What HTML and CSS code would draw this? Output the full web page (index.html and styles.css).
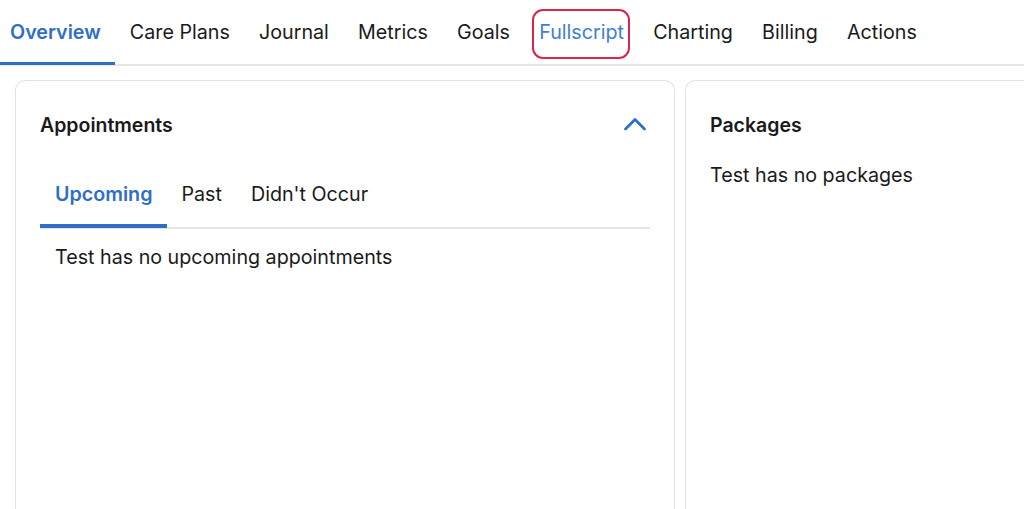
FILE: index.html
```html
<!DOCTYPE html>
<html lang="en">
<head>
    <meta charset="UTF-8">
    <meta name="viewport" content="width=device-width, initial-scale=1.0">
    <title>Client Overview</title>
    <link rel="stylesheet" href="styles.css">
</head>
<body>
    <nav class="main-tabs">
        <a class="main-tab active">Overview</a>
        <a class="main-tab">Care Plans</a>
        <a class="main-tab">Journal</a>
        <a class="main-tab">Metrics</a>
        <a class="main-tab">Goals</a>
        <a class="main-tab highlighted">Fullscript</a>
        <a class="main-tab">Charting</a>
        <a class="main-tab">Billing</a>
        <a class="main-tab">Actions</a>
    </nav>

    <div class="cards">
        <section class="card appointments">
            <div class="card-header">
                <h2>Appointments</h2>
                <button class="collapse-btn" aria-label="Collapse">
                    <svg width="24" height="16" viewBox="0 0 24 16">
                        <path d="M2.5 13 L12 3.5 L21.5 13" fill="none" stroke="#2f6fc6" stroke-width="2.8" stroke-linecap="round" stroke-linejoin="round"/>
                    </svg>
                </button>
            </div>
            <div class="sub-tabs">
                <a class="sub-tab active">Upcoming</a>
                <a class="sub-tab">Past</a>
                <a class="sub-tab">Didn't Occur</a>
            </div>
            <p class="empty">Test has no upcoming appointments</p>
        </section>

        <section class="card packages">
            <div class="card-header">
                <h2>Packages</h2>
            </div>
            <p class="empty flush">Test has no packages</p>
        </section>
    </div>
</body>
</html>
```

FILE: styles.css
```css
* {
    margin: 0;
    padding: 0;
    box-sizing: border-box;
}

body {
    font-family: Inter, 'Noto Sans', sans-serif;
    color: #1a1a1a;
    background: #fff;
    height: 100vh;
    overflow: hidden;
}

.main-tabs {
    display: flex;
    height: 66px;
    border-bottom: 2px solid #e6e6e6;
}

.main-tab {
    position: relative;
    display: flex;
    align-items: center;
    padding: 0 14.6px 1px;
    font-size: 19.7px;
    color: #1a1a1a;
    cursor: pointer;
}

.main-tab:first-child {
    padding-left: 10px;
}

.main-tab.active {
    color: #2f6fc6;
    font-weight: 600;
}

.main-tab.active::after {
    content: "";
    position: absolute;
    left: 0;
    right: 0;
    bottom: -1px;
    height: 3px;
    background: #2f6fc6;
}

.main-tab.highlighted {
    color: #3f7fd0;
}

/* red focus ring around the Fullscript tab */
.main-tab.highlighted::before {
    content: "";
    position: absolute;
    left: 7px;
    right: 9px;
    top: 9px;
    bottom: 5px;
    border: 2px solid #d9264a;
    border-radius: 11px;
}

.cards {
    display: flex;
    gap: 10px;
    padding: 14px 0 0 15px;
}

.card {
    height: 429px;
    border: 1px solid #e2e2e2;
    border-bottom: none;
    border-radius: 10px 10px 0 0;
    padding: 0 24px;
}

.appointments {
    width: 660px;
    flex-shrink: 0;
}

.packages {
    width: 360px;
    flex-shrink: 0;
}

.card-header {
    display: flex;
    justify-content: space-between;
    align-items: center;
    height: 88px;
}

.card-header h2 {
    font-size: 19.5px;
    font-weight: 600;
}

.collapse-btn {
    background: none;
    border: none;
    cursor: pointer;
    display: flex;
    margin-right: 3px;
    margin-top: -2px;
}

.sub-tabs {
    display: flex;
    height: 60px;
    border-bottom: 2px solid #e4e4ec;
}

.sub-tab {
    position: relative;
    display: flex;
    align-items: center;
    padding: 0 14.5px 8px;
    font-size: 19.7px;
    cursor: pointer;
}

.sub-tab:first-child {
    padding-left: 15px;
}

.sub-tab.active {
    color: #2f6fc6;
    font-weight: 600;
}

.sub-tab.active::after {
    content: "";
    position: absolute;
    left: 0;
    right: 0;
    bottom: -1px;
    height: 4px;
    background: #2f6fc6;
}

.empty {
    font-size: 19.7px;
    padding: 16px 15px 0;
}

.empty.flush {
    padding: 0;
    margin-top: -6px;
}
```
